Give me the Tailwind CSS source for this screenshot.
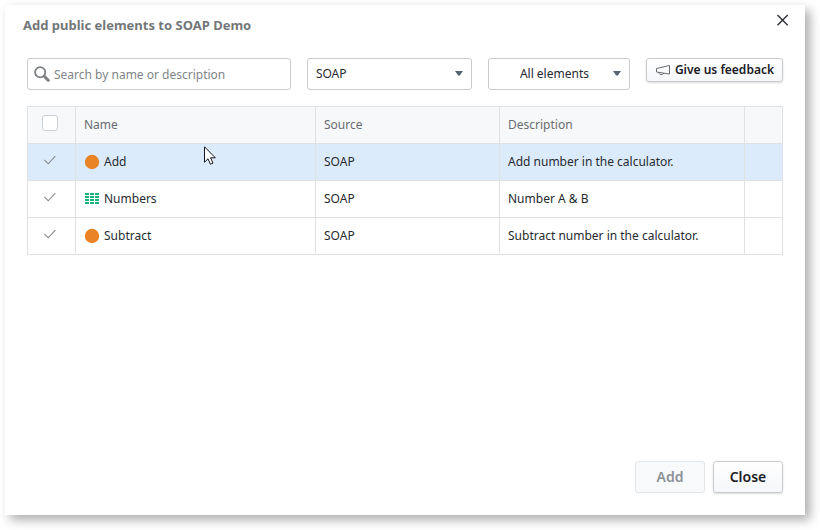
<!DOCTYPE html>
<html lang="en">
<head>
<meta charset="utf-8">
<meta name="viewport" content="width=device-width, initial-scale=1">
<title>Add public elements to SOAP Demo</title>
<script src="https://cdn.jsdelivr.net/npm/@tailwindcss/browser@4"></script>
</head>
<body class="bg-white font-['Noto_Sans','Open_Sans',sans-serif] text-xs text-[#272b30]">
<svg class="hidden" aria-hidden="true">
  <symbol id="tick" viewBox="0 0 12 10"><path d="M.4 4.8 4.2 8.8 11.3 1.2" fill="none" stroke="currentColor" stroke-width="1.1"/></symbol>
  <symbol id="caret" viewBox="0 0 8 5"><path d="M0 0h8L4.8 4.6H3.2z" fill="currentColor"/></symbol>
</svg>
<div class="flex min-h-screen pt-[5px] pr-[15px] pb-[15px] pl-[5px]">
  <main role="dialog" aria-labelledby="title" class="flex flex-1 flex-col bg-white px-[22px] pb-[22px] shadow-[5px_5px_10px_rgba(0,0,0,0.32)]">
    <header class="-ml-1 flex h-[53px] items-start justify-between">
      <h1 id="title" class="pt-[10px] text-[13px] leading-5 font-bold text-[#73777a]">Add public elements to SOAP Demo</h1>
      <button type="button" aria-label="Close dialog" class="mt-[5px] -mr-[10px] grid size-5 place-items-center text-[#272b30]">
        <svg class="size-3" viewBox="0 0 12 12" fill="none" stroke="currentColor" stroke-width="1.3"><path d="M.5 1 10.7 11.2M10.7 1 .5 11.2"/></svg>
      </button>
    </header>

    <div class="flex items-start gap-4">
      <label class="flex h-8 min-w-0 flex-1 items-center gap-1 rounded-[3px] border border-[#c9cbcd] px-1.5">
        <svg class="size-4 shrink-0 text-[#7d8184]" viewBox="0 0 16 16" fill="none" stroke="currentColor"><circle cx="6.2" cy="6.2" r="5.1" stroke-width="1.8"/><path d="m10 10 5.2 5.2" stroke-width="3"/></svg>
        <input type="text" aria-label="Search" placeholder="Search by name or description" class="min-w-0 flex-1 pt-0.5 outline-none placeholder:text-[#818589]">
      </label>
      <div class="relative w-[165px]">
        <select aria-label="Source" class="h-8 w-full appearance-none rounded-[3px] border border-[#c9cbcd] bg-white pl-2"><option>SOAP</option></select>
        <svg class="pointer-events-none absolute top-[13px] right-[9px] h-[5px] w-2 text-[#566471]"><use href="#caret"/></svg>
      </div>
      <div class="relative w-[142px]">
        <select aria-label="Element type" class="h-8 w-full appearance-none rounded-[3px] border border-[#c9cbcd] bg-white pl-[31px]"><option>All elements</option></select>
        <svg class="pointer-events-none absolute top-[13px] right-[9px] h-[5px] w-2 text-[#566471]"><use href="#caret"/></svg>
      </div>
      <button type="button" class="flex h-6 items-center justify-center gap-1 rounded-[3px] border border-[#c9cbcd] bg-linear-to-b from-white to-[#f5f7fa] px-2 pb-px font-semibold whitespace-nowrap text-[#1c2026] shadow-[0_1px_2px_rgba(0,0,0,0.15)]">
        <svg class="h-3 w-4" viewBox="0 0 16 12" fill="none" stroke="#6a6d70" stroke-linejoin="round"><path d="M1.5 4.5 14.5 1.5v8.5L1.5 8zM4 8.5c0 2.8 4.5 2.8 4.5 .6"/></svg>
        Give us feedback
      </button>
    </div>

    <table class="mt-4 w-full table-fixed border-collapse text-left [&_td]:border [&_td]:border-[#dfe1e3] [&_td]:px-2 [&_th]:border [&_th]:border-[#dfe1e3] [&_th]:px-2 [&_th]:font-normal">
      <colgroup><col class="w-12"><col class="w-[240px]"><col class="w-[184px]"><col><col class="w-[38px]"></colgroup>
      <thead class="bg-[#f6f8fa] text-[#6a6d70]">
        <tr class="h-[37px]">
          <td><div class="-mt-1 flex justify-center pr-1"><input type="checkbox" aria-label="Select all" class="block size-4 appearance-none rounded-[3px] border border-[#cdd0d4] bg-white"></div></td>
          <th scope="col">Name</th><th scope="col">Source</th><th scope="col">Description</th><td></td>
        </tr>
      </thead>
      <tbody>
        <tr class="h-[37px] bg-[#dcebfc]">
          <td><label class="-mt-1 grid place-items-center pr-1 text-[#85898c]"><input type="checkbox" checked aria-label="Add" class="col-start-1 row-start-1 size-4 appearance-none"><svg class="pointer-events-none col-start-1 row-start-1 h-[10px] w-3"><use href="#tick"/></svg></label></td>
          <td><span class="flex items-center gap-1"><svg class="size-4" viewBox="0 0 16 16"><circle cx="8" cy="8" r="7.2" fill="#e98325"/></svg>Add</span></td>
          <td>SOAP</td><td>Add number in the calculator.</td><td></td>
        </tr>
        <tr class="h-[37px]">
          <td><label class="-mt-1 grid place-items-center pr-1 text-[#85898c]"><input type="checkbox" checked aria-label="Numbers" class="col-start-1 row-start-1 size-4 appearance-none"><svg class="pointer-events-none col-start-1 row-start-1 h-[10px] w-3"><use href="#tick"/></svg></label></td>
          <td><span class="flex items-center gap-1"><svg class="size-4" viewBox="0 0 16 16" fill="none" stroke="#19b27b" stroke-width="2" stroke-dasharray="4 1" shape-rendering="crispEdges"><path d="M1 3h14M1 6h14M1 9h14M1 12h14"/></svg>Numbers</span></td>
          <td>SOAP</td><td>Number A &amp; B</td><td></td>
        </tr>
        <tr class="h-[37px]">
          <td><label class="-mt-1 grid place-items-center pr-1 text-[#85898c]"><input type="checkbox" checked aria-label="Subtract" class="col-start-1 row-start-1 size-4 appearance-none"><svg class="pointer-events-none col-start-1 row-start-1 h-[10px] w-3"><use href="#tick"/></svg></label></td>
          <td><span class="flex items-center gap-1"><svg class="size-4" viewBox="0 0 16 16"><circle cx="8" cy="8" r="7.2" fill="#e98325"/></svg>Subtract</span></td>
          <td>SOAP</td><td>Subtract number in the calculator.</td><td></td>
        </tr>
      </tbody>
    </table>

    <footer class="mt-auto flex justify-end gap-2 text-sm font-semibold">
      <button type="button" disabled class="h-8 w-[70px] rounded-[3px] border border-[#e1e4e8] bg-[#f8f9fb] text-[#8b9096]">Add</button>
      <button type="button" class="h-8 w-[70px] rounded-[3px] border border-[#c9cbcd] bg-linear-to-b from-white to-[#f5f7fa] text-[#1c2026] shadow-[0_1px_2px_rgba(0,0,0,0.15)]">Close</button>
    </footer>
  </main>
</div>
<svg class="pointer-events-none absolute top-[146px] left-[204px] h-5 w-3" viewBox="0 0 12 20" aria-hidden="true"><path d="M.5.8v15.4l3.5-3.4 2.4 5.4 2.6-1.1-2.4-5.3h4.7z" fill="#fff" stroke="#15151f"/></svg>
</body>
</html>
